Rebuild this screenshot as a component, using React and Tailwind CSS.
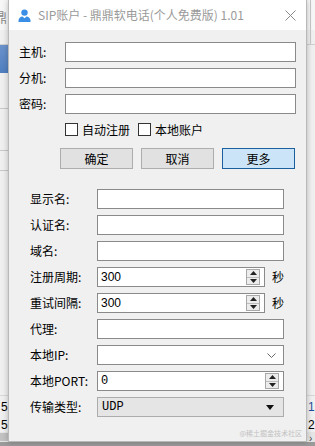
import React from "react";

const CJK = "font-['Noto_Sans_CJK_SC','Noto_Sans',sans-serif]";

function TextBox({ w = "w-[231px]", children }) {
  return (
    <div className={`${w} h-[20px] border border-[#8a8a8a] bg-white flex items-center px-[3px] text-[12px] text-black`}>
      {children}
    </div>
  );
}

function Spinner() {
  return (
    <div className="ml-auto mr-[1px] w-[14px] h-[16px] border border-[#a8a8a8] bg-[#ececec] flex flex-col">
      <div className="flex-1 flex items-center justify-center border-b border-[#bdbdbd]">
        <svg width="7" height="4" viewBox="0 0 7 4"><path d="M3.5 0L7 4H0z" fill="#222" /></svg>
      </div>
      <div className="flex-1 flex items-center justify-center">
        <svg width="7" height="4" viewBox="0 0 7 4"><path d="M0 0h7L3.5 4z" fill="#222" /></svg>
      </div>
    </div>
  );
}

function Row1({ label }) {
  return (
    <div className="flex items-center h-[20px]">
      <div className={`w-[46px] text-[12px] text-black ${CJK}`}>{label}</div>
      <TextBox />
    </div>
  );
}

function Row2({ label, children, after }) {
  return (
    <div className="flex items-center h-[20px]">
      <div className={`w-[67px] text-[12px] text-black ${CJK}`}>{label}</div>
      {children}
      {after}
    </div>
  );
}

function Check({ label }) {
  return (
    <div className="flex items-center">
      <div className="w-[13px] h-[13px] border border-[#333] bg-white" />
      <span className={`ml-[4px] text-[12px] text-black ${CJK}`}>{label}</span>
    </div>
  );
}

export default function App() {
  return (
    <div className={`relative w-[315px] h-[446px] overflow-hidden bg-[#f0f0f0] ${CJK}`}>
      {/* background application (behind the dialog) */}
      <div className="absolute left-0 top-0 w-[315px] h-[30px] bg-[#f7f7f7]" />
      <div className="absolute left-[-6px] top-[7px] text-[13px] text-[#8a8a8a]">鼎</div>
      <div className="absolute left-0 top-[44px] w-[315px] h-[1px] bg-[#d0d0d0]" />
      <div className="absolute left-0 top-[45px] w-[10px] h-[28px] bg-gradient-to-b from-[#6b93cc] to-[#4f7fc0]" />
      <div className="absolute left-0 top-[108px] w-[10px] h-[1px] bg-[#c8c8c8]" />
      <div className="absolute left-0 top-[150px] w-[10px] h-[1px] bg-[#c8c8c8]" />
      <div className="absolute left-0 top-[170px] w-[10px] h-[1px] bg-[#c8c8c8]" />
      <div className="absolute left-[310px] top-0 w-[1px] h-[44px] bg-[#c8c8c8]" />
      <div className="absolute left-0 top-[395px] w-[315px] h-[1px] bg-[#d8d8d8]" />
      <div className="absolute left-[1px] top-[398px] text-[12px] text-black font-['Liberation_Sans',sans-serif]">5</div>
      <div className="absolute left-[1px] top-[416px] text-[12px] text-black font-['Liberation_Sans',sans-serif]">5</div>
      <div className="absolute left-[308px] top-[398px] text-[12px] text-[#1f4e9c] font-['Liberation_Sans',sans-serif]">1</div>
      <div className="absolute left-[308px] top-[416px] text-[12px] text-black font-['Liberation_Sans',sans-serif]">2</div>
      <div className="absolute left-0 top-[432px] w-[315px] h-[10px] bg-[#e6e6e6]" />
      <div className="absolute left-0 top-[433px] w-[146px] h-[8px] bg-[#c2c2c2]" />
      <div className="absolute left-[309px] top-[431px] text-[10px] text-[#444] font-['Liberation_Sans',sans-serif]">›</div>
      <div className="absolute left-0 top-[442px] w-[315px] h-[4px] bg-[#9a9a9a]" />

      {/* dialog window */}
      <div className="absolute left-[8px] top-0 w-[299px] h-[442px] border-x border-b border-[#b9b9b9] bg-[#f0f0f0] flex flex-col shadow-[0_0_6px_rgba(0,0,0,0.25)]">
        {/* title bar */}
        <div className="h-[30px] bg-white flex items-center pl-[9px] pr-[9px]">
          <svg width="13" height="13" viewBox="0 0 13 13">
            <circle cx="6.5" cy="3.6" r="3.2" fill="#3a8ee6" />
            <path d="M0.5 13v-1.5C0.5 9 2.5 7.6 4.5 7.4L6.5 9.2 8.5 7.4C10.5 7.6 12.5 9 12.5 11.5V13z" fill="#3a8ee6" />
          </svg>
          <span className={`ml-[7px] text-[12px] text-[#9a9a9a] ${CJK}`}>SIP账户 - 鼎鼎软电话(个人免费版) 1.01</span>
          <svg className="ml-auto mr-[1px]" width="11" height="11" viewBox="0 0 11 11">
            <path d="M0.5 0.5L10.5 10.5M10.5 0.5L0.5 10.5" stroke="#8a8a8a" strokeWidth="1" />
          </svg>
        </div>

        {/* body */}
        <div className="flex flex-col pl-[10px] pt-[12px]">
          <div className="flex flex-col gap-[6px]">
            <Row1 label="主机:" />
            <Row1 label="分机:" />
            <Row1 label="密码:" />
          </div>
          <div className="flex items-center gap-[8px] ml-[46px] mt-[9px] h-[13px]">
            <Check label="自动注册" />
            <Check label="本地账户" />
          </div>
          <div className={`flex gap-[8px] ml-[41px] mt-[12px] text-[12px] text-black ${CJK}`}>
            <div className="w-[73px] h-[21px] border border-[#adadad] bg-[#e1e1e1] flex items-center justify-center">确定</div>
            <div className="w-[73px] h-[21px] border border-[#adadad] bg-[#e1e1e1] flex items-center justify-center">取消</div>
            <div className="w-[73px] h-[21px] border border-[#1a5f9e] bg-[#cce4f7] flex items-center justify-center">更多</div>
          </div>

          <div className="flex flex-col gap-[6px] ml-[11px] mt-[20px]">
            <Row2 label="显示名:"><TextBox w="w-[187px]" /></Row2>
            <Row2 label="认证名:"><TextBox w="w-[187px]" /></Row2>
            <Row2 label="域名:"><TextBox w="w-[187px]" /></Row2>
            <Row2 label="注册周期:" after={<span className="ml-[7px] text-[12px] text-black">秒</span>}>
              <TextBox w="w-[168px]">
                <span className="font-['Liberation_Sans',sans-serif]">300</span>
                <Spinner />
              </TextBox>
            </Row2>
            <Row2 label="重试间隔:" after={<span className="ml-[7px] text-[12px] text-black">秒</span>}>
              <TextBox w="w-[168px]">
                <span className="font-['Liberation_Sans',sans-serif]">300</span>
                <Spinner />
              </TextBox>
            </Row2>
            <Row2 label="代理:"><TextBox w="w-[187px]" /></Row2>
            <Row2 label="本地IP:">
              <TextBox w="w-[187px]">
                <svg className="ml-auto mr-[4px]" width="9" height="5" viewBox="0 0 9 5">
                  <path d="M0.5 0.5L4.5 4.5 8.5 0.5" stroke="#666" strokeWidth="1" fill="none" />
                </svg>
              </TextBox>
            </Row2>
            <Row2 label="本地PORT:">
              <TextBox w="w-[187px]">
                <span className="font-['Liberation_Mono',monospace]">0</span>
                <Spinner />
              </TextBox>
            </Row2>
            <Row2 label="传输类型:">
              <div className="w-[187px] h-[20px] border border-[#acacac] bg-[#e5e5e5] flex items-center px-[4px] text-[12px] text-black">
                <span className="font-['Liberation_Mono',monospace]">UDP</span>
                <svg className="ml-auto mr-[5px]" width="8" height="5" viewBox="0 0 8 5"><path d="M0 0h8L4 5z" fill="#111" /></svg>
              </div>
            </Row2>
          </div>
        </div>
        <div className="mt-auto mb-[4px] mr-[4px] self-end text-[7px] leading-[8px] text-[#c2c2c2]">@稀土掘金技术社区</div>
      </div>
    </div>
  );
}
